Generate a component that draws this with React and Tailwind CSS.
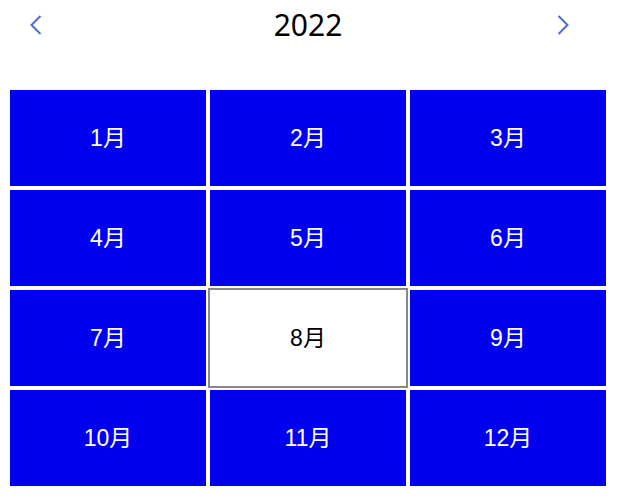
import React from "react";

const months = ["1月","2月","3月","4月","5月","6月","7月","8月","9月","10月","11月","12月"];

export default function App() {
  return (
    <div className="w-[626px] h-[498px] bg-white">
      <div className="ml-2 w-[600px]">
        <div className="relative h-[88px]">
          <button className="absolute left-[22px] top-[15px] w-[12px] h-[20px]">
            <svg width="12" height="20" viewBox="0 0 12 20" fill="none">
              <path d="M10.5 1 L1.5 10 L10.5 19" stroke="#4a6cd6" strokeWidth="2" />
            </svg>
          </button>
          <div className="absolute left-0 right-0 top-[5px] text-center text-[30px] leading-[40px] text-black" style={{fontFamily: '"Noto Sans", sans-serif'}}>2022</div>
          <button className="absolute left-[549px] top-[15px] w-[12px] h-[20px]">
            <svg width="12" height="20" viewBox="0 0 12 20" fill="none">
              <path d="M1.5 1 L10.5 10 L1.5 19" stroke="#4a6cd6" strokeWidth="2" />
            </svg>
          </button>
        </div>
        <div className="grid grid-cols-3">
          {months.map((m) => {
            const sel = m === "8月";
            return (
              <div
                key={m}
                className={
                  sel
                    ? "h-[100px] border-2 border-[#888888] bg-white text-black flex items-center justify-center text-[23px]"
                    : "h-[100px] border-2 border-white bg-[#0000f0] text-white flex items-center justify-center text-[23px]"
                }
                style={{ fontFamily: '"Liberation Sans", "Noto Sans CJK SC", sans-serif' }}
              >
                {m}
              </div>
            );
          })}
        </div>
      </div>
    </div>
  );
}
